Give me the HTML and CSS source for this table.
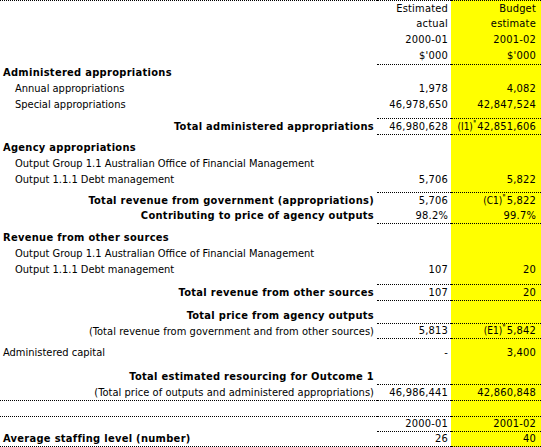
FILE: index.html
```html
<!DOCTYPE html>
<html>
<head>
    <title>Outcome 1 resourcing</title>
    <meta charset="utf-8">
    <link rel="stylesheet" href="styles.css">
</head>
<body>

<table class="sheet">
    <colgroup>
        <col class="col-label">
        <col class="col-actual">
        <col class="col-budget">
    </colgroup>
    <tr class="h16 top">
        <td></td><td class="num">Estimated</td><td class="num budget">Budget</td>
    </tr>
    <tr class="h16">
        <td></td><td class="num">actual</td><td class="num budget">estimate</td>
    </tr>
    <tr class="h16">
        <td></td><td class="num">2000-01</td><td class="num budget">2001-02</td>
    </tr>
    <tr class="h17 line">
        <td></td><td class="num">$'000</td><td class="num budget">$'000</td>
    </tr>
    <tr class="h16">
        <td class="head">Administered appropriations</td><td></td><td class="budget"></td>
    </tr>
    <tr class="h16">
        <td class="sub">Annual appropriations</td><td class="num">1,978</td><td class="num budget">4,082</td>
    </tr>
    <tr class="h15">
        <td class="sub">Special appropriations</td><td class="num">46,978,650</td><td class="num budget">42,847,524</td>
    </tr>
    <tr class="gap7 line">
        <td></td><td></td><td class="budget"></td>
    </tr>
    <tr class="h16 line">
        <td class="total">Total administered appropriations</td><td class="num">46,980,628</td><td class="num budget"><span class="ref">(I1)<sup>''</sup></span>42,851,606</td>
    </tr>
    <tr class="gap5">
        <td></td><td></td><td class="budget"></td>
    </tr>
    <tr class="h16">
        <td class="head">Agency appropriations</td><td></td><td class="budget"></td>
    </tr>
    <tr class="h16">
        <td class="sub">Output Group 1.1 Australian Office of Financial Management</td><td></td><td class="budget"></td>
    </tr>
    <tr class="h15">
        <td class="sub">Output 1.1.1 Debt management</td><td class="num">5,706</td><td class="num budget">5,822</td>
    </tr>
    <tr class="gap6 line">
        <td></td><td></td><td class="budget"></td>
    </tr>
    <tr class="h15">
        <td class="total">Total revenue from government (appropriations)</td><td class="num">5,706</td><td class="num budget"><span class="ref">(C1)<sup>''</sup></span>5,822</td>
    </tr>
    <tr class="h16 line">
        <td class="total">Contributing to price of agency outputs</td><td class="num">98.2%</td><td class="num budget">99.7%</td>
    </tr>
    <tr class="gap6">
        <td></td><td></td><td class="budget"></td>
    </tr>
    <tr class="h16">
        <td class="head">Revenue from other sources</td><td></td><td class="budget"></td>
    </tr>
    <tr class="h16">
        <td class="sub">Output Group 1.1 Australian Office of Financial Management</td><td></td><td class="budget"></td>
    </tr>
    <tr class="h15">
        <td class="sub">Output 1.1.1 Debt management</td><td class="num">107</td><td class="num budget">20</td>
    </tr>
    <tr class="gap8 line">
        <td></td><td></td><td class="budget"></td>
    </tr>
    <tr class="h16 line">
        <td class="total">Total revenue from other sources</td><td class="num">107</td><td class="num budget">20</td>
    </tr>
    <tr class="gap6">
        <td></td><td></td><td class="budget"></td>
    </tr>
    <tr class="h17 line">
        <td class="total">Total price from agency outputs</td><td></td><td class="budget"></td>
    </tr>
    <tr class="h15 line">
        <td class="plain-right">(Total revenue from government and from other sources)</td><td class="num">5,813</td><td class="num budget"><span class="ref">(E1)<sup>''</sup></span>5,842</td>
    </tr>
    <tr class="gap6">
        <td></td><td></td><td class="budget"></td>
    </tr>
    <tr class="h16">
        <td class="plain">Administered capital</td><td class="num">-</td><td class="num budget">3,400</td>
    </tr>
    <tr class="gap8">
        <td></td><td></td><td class="budget"></td>
    </tr>
    <tr class="h16 line">
        <td class="total">Total estimated resourcing for Outcome 1</td><td></td><td class="budget"></td>
    </tr>
    <tr class="h16 line full">
        <td class="plain-right">(Total price of outputs and administered appropriations)</td><td class="num">46,986,441</td><td class="num budget">42,860,848</td>
    </tr>
    <tr class="h16 line full">
        <td></td><td></td><td class="budget"></td>
    </tr>
    <tr class="h15 line">
        <td></td><td class="num">2000-01</td><td class="num budget">2001-02</td>
    </tr>
    <tr class="h15 line full">
        <td class="head">Average staffing level (number)</td><td class="num">26</td><td class="num budget">40</td>
    </tr>
</table>

</body>
</html>
```

FILE: styles.css
```css
body {
    margin: 0px;
    background: white;
}

.sheet {
    border-collapse: separate;
    border-spacing: 0px;
    table-layout: fixed;
    width: 541px;
    font: 11px "DejaVu Sans Condensed", "Liberation Sans", sans-serif;
    color: black;
}

.col-label {
    width: 377px;
}

.col-actual {
    width: 74px;
}

.col-budget {
    width: 90px;
}

td {
    padding: 0px;
    box-sizing: border-box;
    white-space: nowrap;
    line-height: 14px;
    vertical-align: middle;
    overflow: hidden;
}

.h15 td { height: 15px; }
.h16 td { height: 16px; }
.h17 td { height: 17px; }
.gap5 td { height: 5px; }
.gap6 td { height: 6px; }
.gap7 td { height: 7px; }
.gap8 td { height: 8px; }

.top td {
    border-top: 1px dotted black;
}

.line td + td {
    border-bottom: 1px dotted black;
}

.full td {
    border-bottom: 1px dotted black;
}

.budget {
    background-color: #ffff00;
}

.num {
    text-align: right;
    padding-right: 3px;
    letter-spacing: 0.2px;
}

.num.budget {
    padding-right: 5px;
}

.head {
    font-weight: bold;
    letter-spacing: 0.3px;
    padding-left: 3px;
}

.sub {
    padding-left: 15px;
}

.plain {
    padding-left: 3px;
}

.total {
    font-weight: bold;
    letter-spacing: 0.3px;
    text-align: right;
    padding-right: 3px;
}

.plain-right {
    text-align: right;
    padding-right: 3px;
    letter-spacing: 0.05px;
}

.ref {
    font-size: 10px;
    letter-spacing: 0px;
}

.ref sup {
    font-size: 9px;
    line-height: 0px;
    vertical-align: 3px;
    letter-spacing: -1px;
    padding-right: 2px;
}
```
